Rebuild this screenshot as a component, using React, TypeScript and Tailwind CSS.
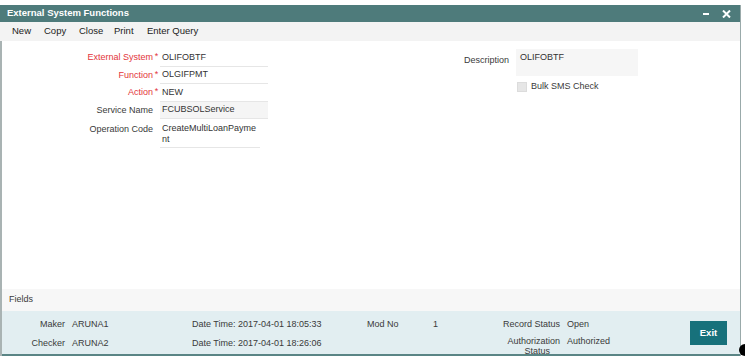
import React from 'react';

const font = { fontFamily: '"Liberation Sans", Arial, sans-serif' };

interface Field {
  label: string;
  value: string;
  required?: boolean;
  readOnly?: boolean;
}

const fields: Field[] = [
  { label: 'External System', value: 'OLIFOBTF', required: true },
  { label: 'Function', value: 'OLGIFPMT', required: true },
  { label: 'Action', value: 'NEW', required: true },
  { label: 'Service Name', value: 'FCUBSOLService', readOnly: true },
];

const App = () => {
  return (
    <div className="relative w-[745px] h-[359px] bg-white text-[9px] text-[#3a3a3a] whitespace-nowrap" style={font}>
      <div className="absolute left-0 top-[5px] w-[741px] h-[351px] flex flex-col border-r border-[#9aa]">
        {/* Title bar */}
        <div className="h-[17px] bg-[#4e7b7b] flex items-center justify-between pl-[7px] pr-[9px] text-white shrink-0">
          <span className="text-[9.5px] font-bold">External System Functions</span>
          <div className="flex items-center gap-[13px]">
            <span className="block w-[6px] h-[2px] bg-white" />
            <svg width="9" height="8" viewBox="0 0 9 8">
              <path d="M1 0.5 L8 7.5 M8 0.5 L1 7.5" stroke="white" strokeWidth="2" />
            </svg>
          </div>
        </div>

        {/* Toolbar */}
        <div className="h-[19px] bg-[#f3f3f3] flex items-center pl-[12px] text-[9.5px] text-[#222] shrink-0">
          <span className="w-[32px]">New</span>
          <span className="w-[35px]">Copy</span>
          <span className="w-[35px]">Close</span>
          <span className="w-[33px]">Print</span>
          <span>Enter Query</span>
        </div>

        <div className="flex-1 flex flex-col border-l-2 border-[#a9b3b3]">
          {/* Body */}
          <div className="flex-1 flex pt-[8px]">
            <div className="w-[268px] flex flex-col">
              {fields.map((f) => (
                <div key={f.label} className="flex items-center h-[17.5px]">
                  <div className={`w-[151px] text-right ${f.required ? 'text-[#e3343a]' : ''}`}>{f.label}</div>
                  <div className="w-[7px] text-[#e3343a] text-center leading-none pb-[2px]">
                    {f.required ? '*' : ''}
                  </div>
                  <div
                    className={`w-[108px] h-full flex items-center pl-[2px] border-b border-[#e6e6e6] text-[#333] ${
                      f.readOnly ? 'bg-[#f5f5f5]' : ''
                    }`}
                  >
                    {f.value}
                  </div>
                </div>
              ))}
              <div className="flex items-start">
                <div className="w-[151px] text-right pt-[5px] leading-[11px]">Operation Code</div>
                <div className="w-[7px]" />
                <div className="w-[100px] pl-[2px] pt-[4px] pb-[2px] leading-[11px] border-b border-[#e6e6e6] text-[#333]">
                  CreateMultiLoanPayme
                  <br />
                  nt
                </div>
              </div>
            </div>

            <div className="ml-[194px] flex flex-col">
              <div className="flex items-start">
                <div className="w-[42px] text-right pt-[6px] leading-[10px]">Description</div>
                <div className="ml-[10px] w-[122px] h-[27px] bg-[#f6f6f6] pl-[4px] pt-[3px] leading-[11px] text-[#333]">
                  OLIFOBTF
                </div>
              </div>
              <div className="flex items-center ml-[53px] mt-[4px] gap-[4px]">
                <span className="block w-[10px] h-[10px] bg-[#e6e6e6] border border-[#dcdcdc]" />
                <span>Bulk SMS Check</span>
              </div>
            </div>
          </div>

          {/* Fields strip */}
          <div className="h-[22px] bg-[#f7f7f7] flex items-center pl-[7px] shrink-0">Fields</div>

          {/* Audit footer */}
          <div className="h-[45px] bg-[#e2eef1] flex items-start border-b-2 border-[#5a8585] shrink-0 leading-[12px]">
            <div className="w-[190px] pt-[7px] flex flex-col gap-[7px]">
              <div className="flex">
                <span className="w-[63px] text-right">Maker</span>
                <span className="ml-[7px]">ARUNA1</span>
              </div>
              <div className="flex">
                <span className="w-[63px] text-right">Checker</span>
                <span className="ml-[7px]">ARUNA2</span>
              </div>
            </div>
            <div className="w-[175px] pt-[7px] flex flex-col gap-[7px]">
              <div className="flex">
                <span className="w-[46px]">Date Time:</span>
                <span>2017-04-01 18:05:33</span>
              </div>
              <div className="flex">
                <span className="w-[46px]">Date Time:</span>
                <span>2017-04-01 18:26:06</span>
              </div>
            </div>
            <div className="w-[128px] pt-[7px] flex">
              <span className="w-[66px]">Mod No</span>
              <span>1</span>
            </div>
            <div className="pt-[7px] flex flex-col gap-[6px]">
              <div className="flex">
                <span className="w-[65px] text-right">Record Status</span>
                <span className="ml-[7px]">Open</span>
              </div>
              <div className="flex">
                <span className="w-[65px] flex flex-col items-end leading-[10px]">
                  <span>Authorization</span>
                  <span className="pr-[10px]">Status</span>
                </span>
                <span className="ml-[7px] leading-[10px]">Authorized</span>
              </div>
            </div>
            <button className="ml-auto mr-[13px] mt-[10px] w-[37px] h-[24px] bg-[#17717b] text-white font-bold text-[9.5px]">
              Exit
            </button>
          </div>
        </div>
      </div>
      {/* cursor blob */}
      <div className="absolute left-[739px] top-[344px] w-[6px] h-[12px] bg-black rounded-l-full" />
    </div>
  );
};

export default App;
